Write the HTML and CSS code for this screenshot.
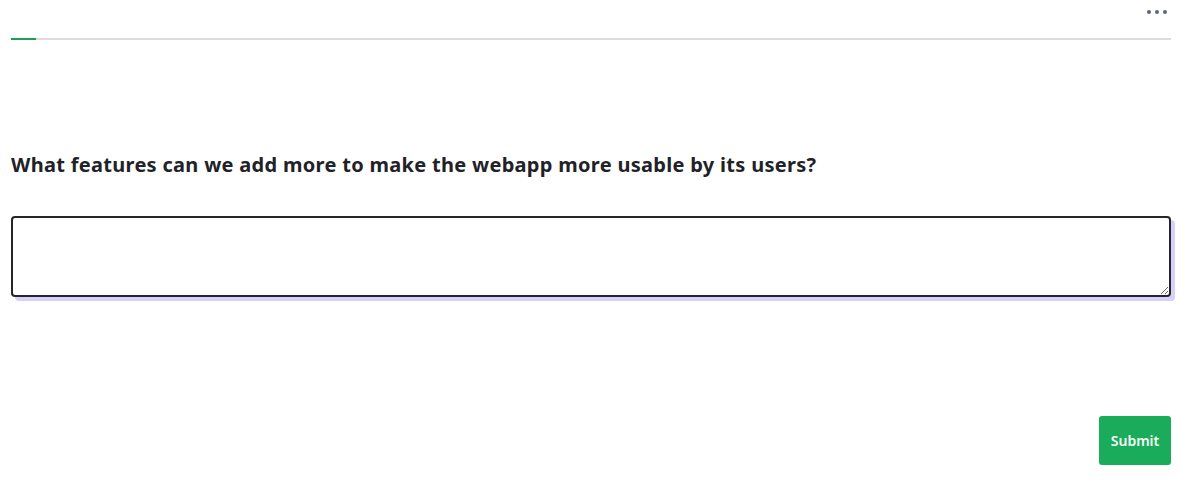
FILE: index.html
```html
<!DOCTYPE html>
<html lang="en">
<head>
    <meta charset="UTF-8">
    <meta name="viewport" content="width=device-width, initial-scale=1.0">
    <title>Feedback</title>
    <link rel="stylesheet" href="styles.css">
</head>
<body>
    <div id="container">
        <div class="topbar">
            <button class="more" aria-label="More options">
                <span class="dot"></span><span class="dot"></span><span class="dot"></span>
            </button>
        </div>

        <div class="progress">
            <div class="progress-fill" style="width: 25px;"></div>
        </div>

        <div class="question">
            <h1>What features can we add more to make the webapp more usable by its users?</h1>
            <textarea class="answer"></textarea>
        </div>

        <div class="actions">
            <button class="submit">Submit</button>
        </div>
    </div>
</body>
</html>
```

FILE: styles.css
```css
body {
    font-family: 'Noto Sans', sans-serif;
    margin: 0;
    padding: 0;
    background: #fff;
    color: #1f2328;
}

#container {
    padding: 0 18px 0 11px;
}

.topbar {
    display: flex;
    justify-content: flex-end;
    height: 24px;
    align-items: center;
    padding-right: 4px;
}

.more {
    display: flex;
    gap: 4px;
    background: none;
    border: none;
    padding: 0;
    cursor: pointer;
}

.dot {
    width: 4px;
    height: 4px;
    border-radius: 50%;
    background: #5f6478;
}

.progress {
    margin-top: 14px;
    height: 2px;
    background: #dcdcdc;
}

.progress-fill {
    height: 2px;
    background: #1f9d55;
}

.question {
    padding-top: 111px;
}

h1 {
    font-size: 20px;
    line-height: 28px;
    font-weight: 700;
    letter-spacing: 0.3px;
    margin: 0 0 37px 0;
    color: #1f2328;
}

.answer {
    display: block;
    box-sizing: border-box;
    width: 100%;
    height: 81px;
    border: 2px solid #25262b;
    border-radius: 4px;
    box-shadow: 4px 4px 0 #d6d0fb;
    outline: none;
    font-family: inherit;
    font-size: 16px;
    padding: 8px;
}

.actions {
    display: flex;
    justify-content: flex-end;
    margin-top: 119px;
}

.submit {
    background-color: #1aac5a;
    color: #f4fff7;
    border: none;
    border-radius: 3px;
    width: 72px;
    height: 49px;
    font-family: inherit;
    font-size: 14px;
    font-weight: 600;
    cursor: pointer;
}

.submit:hover {
    background-color: #169a50;
}
```
